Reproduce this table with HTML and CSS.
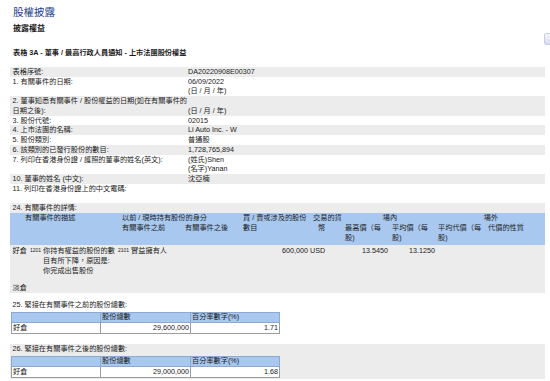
FILE: index.html
```html
<!DOCTYPE html>
<html lang="zh-Hant">
<head>
<meta charset="utf-8">
<title>股權披露</title>
<link rel="stylesheet" href="styles.css">
</head>
<body>
<div class="page">
  <h1 class="title">股權披露</h1>
  <h2 class="subtitle">披露權益</h2>
  <h3 class="formname">表格 3A - 董事 / 最高行政人員通知 - 上市法團股份權益</h3>

  <div class="info">
    <div class="row alt"><div class="lbl">表格序號:</div><div class="val">DA20220908E00307</div></div>
    <div class="row"><div class="lbl">1. 有關事件的日期:</div><div class="val">06/09/2022<br>(日 / 月 / 年)</div></div>
    <div class="row alt"><div class="lbl">2. 董事知悉有關事件 / 股份權益的日期(如在有關事件的<br>日期之後):</div><div class="val bottom">(日 / 月 / 年)</div></div>
    <div class="row"><div class="lbl">3. 股份代號:</div><div class="val">02015</div></div>
    <div class="row alt"><div class="lbl">4. 上市法團的名稱:</div><div class="val">Li Auto Inc. - W</div></div>
    <div class="row"><div class="lbl">5. 股份類別:</div><div class="val">普通股</div></div>
    <div class="row alt"><div class="lbl">6. 該類別的已發行股份的數目:</div><div class="val">1,728,765,894</div></div>
    <div class="row"><div class="lbl">7. 列印在香港身份證 / 護照的董事的姓名(英文):</div><div class="val">(姓氏)Shen<br>(名字)Yanan</div></div>
    <div class="row alt"><div class="lbl">10. 董事的姓名 (中文):</div><div class="val">沈亞楠</div></div>
    <div class="row"><div class="lbl">11. 列印在香港身份證上的中文電碼:</div><div class="val"></div></div>
  </div>

  <div class="row alt sec24"><div class="lbl">24. 有關事件的詳情:</div></div>

  <div class="dhead cols">
    <div class="h h-desc">有關事件的描述</div>
    <div class="h h-cap">以前 / 現時持有股份的身分</div>
    <div class="h h-before">有關事件之前</div>
    <div class="h h-after">有關事件之後</div>
    <div class="h h-qty">買 / 賣或涉及的股份<br>數目</div>
    <div class="h h-cur">交易的貨<br><span class="indent">幣</span></div>
    <div class="h h-on">場內</div>
    <div class="h h-high">最高價（每<br>股)</div>
    <div class="h h-avg">平均價（每<br>股)</div>
    <div class="h h-off">場外</div>
    <div class="h h-cons">平均代價（每<br>股)</div>
    <div class="h h-nat">代價的性質</div>
  </div>

  <div class="dbody">
    <div class="drow first cols">
      <div class="c pos">好倉</div>
      <div class="c codecell">1201</div>
      <div class="c">你持有權益的股份的數<br>目有所下降，原因是:<br>你完成出售股份</div>
      <div class="c capcell"><span class="code">2101</span> 實益擁有人</div>
      <div class="c"></div>
      <div class="c num">600,000</div>
      <div class="c">USD</div>
      <div class="c num">13.5450</div>
      <div class="c num">13.1250</div>
      <div class="c"></div>
      <div class="c"></div>
    </div>
    <div class="drow second cols">
      <div class="c pos">淡倉</div>
    </div>
  </div>

  <div class="sum">
    <div class="sumlbl">25. 緊接在有關事件之前的股份總數:</div>
    <table class="stbl">
      <colgroup><col class="k1"><col class="k2"><col class="k3"></colgroup>
      <tr><th></th><th>股份總數</th><th>百分率數字(%)</th></tr>
      <tr><td>好倉</td><td class="n">29,600,000</td><td class="n">1.71</td></tr>
    </table>
  </div>

  <div class="sum alt sum26">
    <div class="sumlbl">26. 緊接在有關事件之後的股份總數:</div>
    <table class="stbl">
      <colgroup><col class="k1"><col class="k2"><col class="k3"></colgroup>
      <tr><th></th><th>股份總數</th><th>百分率數字(%)</th></tr>
      <tr><td>好倉</td><td class="n">29,000,000</td><td class="n">1.68</td></tr>
    </table>
  </div>
</div>
<div class="edge"></div>
</body>
</html>
```

FILE: styles.css
```css
* { box-sizing: border-box; margin: 0; padding: 0; }

html, body { background: #ffffff; }

body {
  width: 550px;
  height: 381px;
  overflow: hidden;
  position: relative;
  font-family: "Liberation Sans", "Noto Sans CJK TC", sans-serif;
  font-size: 7.2px;
  line-height: 9.75px;
  color: #1b1b1b;
}

.page {
  padding: 5px 5px 0 10px;
  width: 550px;
}

.title {
  font-size: 10.5px;
  line-height: 14px;
  font-weight: normal;
  color: #24408f;
  padding-left: 3px;
}

.subtitle {
  font-size: 8px;
  line-height: 10px;
  font-weight: bold;
  margin-top: 4.5px;
  padding-left: 3px;
}

.formname {
  font-size: 7.2px;
  line-height: 9.75px;
  font-weight: bold;
  margin-top: 14.6px;
  padding-left: 3px;
}

.info { margin-top: 9.15px; }

.row {
  display: grid;
  grid-template-columns: 178px 1fr;
  white-space: nowrap;
}

.alt { background: #ececec; }

.lbl { padding-left: 2.5px; }
.val { padding-left: 0; }
.bottom { align-self: end; }

.sec24 { margin-top: 9.75px; }

.cols {
  display: grid;
  grid-template-columns: 20px 13px 74px 65px 61px 67px 33px 47px 47px 49px 59px;
  white-space: nowrap;
}

.dhead {
  background: #a8c8f0;
  grid-template-rows: 9.75px 9.75px 9.75px;
  padding-bottom: 2.5px;
  color: #1e1e1e;
}

.h-desc   { grid-column: 1 / 4; grid-row: 1; padding-left: 15px; }
.h-cap    { grid-column: 4 / 6; grid-row: 1; padding-left: 5px; }
.h-before { grid-column: 4; grid-row: 2; padding-left: 5px; }
.h-after  { grid-column: 5; grid-row: 2; padding-left: 3px; }
.h-qty    { grid-column: 6; grid-row: 1 / 3; }
.h-cur    { grid-column: 7; grid-row: 1 / 3; padding-left: 3px; }
.h-on     { grid-column: 8 / 10; grid-row: 1; text-align: center; }
.h-high   { grid-column: 8; grid-row: 2 / 4; padding-left: 2px; }
.h-avg    { grid-column: 9; grid-row: 2 / 4; padding-left: 2px; }
.h-off    { grid-column: 10 / 12; grid-row: 1; text-align: center; }
.h-cons   { grid-column: 10; grid-row: 2 / 4; padding-left: 1px; }
.h-nat    { grid-column: 11; grid-row: 2; padding-left: 2px; }

.indent { padding-left: 5px; }

.dbody { background: #ececec; }

.drow.first { padding: 1.5px 0 4px; }
.drow.second { padding: 3.5px 0 0.5px; }

.pos { padding-left: 2.5px; }

.codecell {
  font-size: 5px;
  line-height: 8px;
}

.capcell { padding-left: 1px; }

.code {
  font-size: 5px;
  vertical-align: 1px;
}

.num {
  text-align: right;
  padding-right: 2px;
}

.sum { margin-top: 6.5px; }
.sum26 { margin-top: 10px; padding-bottom: 1px; }

.sumlbl { padding-left: 2.5px; white-space: nowrap; }

.stbl {
  border-collapse: collapse;
  table-layout: fixed;
  width: 268px;
  margin: 2.25px 0 0 1px;
}

.k1 { width: 89px; }
.k2 { width: 90px; }
.k3 { width: 89px; }

.stbl th,
.stbl td {
  border: 1px solid #9c9c9c;
  height: 10.5px;
  padding: 0 1px;
  line-height: 8.5px;
  font-weight: normal;
  text-align: left;
  white-space: nowrap;
  background: #ffffff;
}

.stbl th {
  background: #a8c8f0;
  border-color: #8ea9cf;
}

.stbl td.n { text-align: right; }

.edge {
  position: absolute;
  left: 544px;
  top: 33px;
  width: 9px;
  height: 12px;
  border: 1px solid #c9cde2;
  border-radius: 2px;
  background: linear-gradient(#f3f4fb, #d8dcef);
}
```
